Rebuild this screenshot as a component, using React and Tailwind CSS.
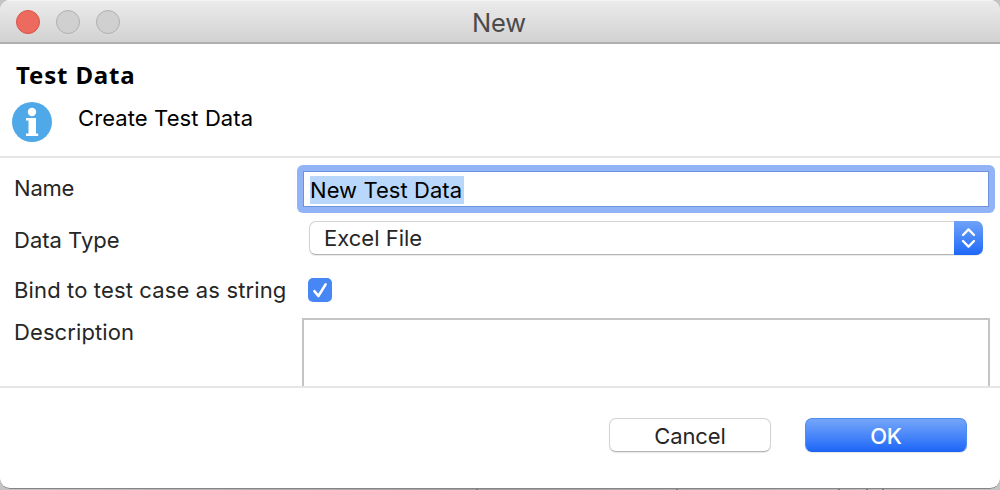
import React from "react";

function TitleBar() {
  return (
    <header className="grid h-11 shrink-0 grid-cols-[1fr_auto_1fr] items-center border-t border-b-2 border-t-[#f4f4f4] border-b-[#b0b0b0] bg-linear-to-b from-[#ebebeb] to-[#d2d2d2] px-4">
      <div className="flex gap-4">
        <span className="size-6 rounded-full border border-[#d9534a] bg-[#ed6a5e]" />
        <span className="size-6 rounded-full border border-[#b0b0b0] bg-[#d0d0d0]" />
        <span className="size-6 rounded-full border border-[#b0b0b0] bg-[#d0d0d0]" />
      </div>
      <h1 className="pt-0.5 pr-0.5 text-[25.5px] leading-8 tracking-[-0.2px] text-[#4b4b4b]">New</h1>
    </header>
  );
}

function Banner() {
  return (
    <section className="h-[114px] shrink-0 border-b-2 border-[#e5e5e5] pt-[15px]">
      <h2 className="pl-4 font-['Noto_Sans'] text-[24px] leading-8 font-bold tracking-[0.85px] text-black">Test Data</h2>
      <div className="flex pt-[11px] pl-3">
        <svg className="size-10" viewBox="0 0 40 40" aria-hidden="true">
          <circle cx="20" cy="20" r="20" fill="#4fa8e8" />
          <circle cx="20" cy="10" r="4.2" fill="#fff" />
          <path d="M14 16h10v15.5h2.2V34H14v-2.5h2.5v-13H14z" fill="#fff" />
        </svg>
        <p className="pl-[26px] text-[22px] leading-8 tracking-[0.1px] text-black">Create Test Data</p>
      </div>
    </section>
  );
}

function Form() {
  return (
    <form className="h-[230px] shrink-0 overflow-hidden border-b-2 border-[#e5e5e5] text-[22px] text-[#262626]">
      <div className="flex h-[55px] pt-[7px]">
        <label className="w-[297px] pt-[7px] pl-3.5 leading-8 tracking-[-0.2px]">Name</label>
        <div className="h-12 w-[698px] rounded-md bg-[#92b3f5] p-1.5">
          <div className="flex h-9 items-center border border-[#6c92dc] bg-white pt-0.5 pl-1.5">
            <span className="bg-[#b9d7fb] pr-0.5 leading-7 tracking-[0.05px] text-black">New Test Data</span>
          </div>
        </div>
      </div>
      <div className="flex h-[65px] pt-2">
        <label className="w-[309px] pt-[3px] pl-3.5 leading-8">Data Type</label>
        <div className="flex h-[34px] w-[674px] rounded-[7px] border border-[#d2d2d2] border-r-0 border-b-[#b5b5b5] bg-white shadow-[0_1px_1px_#00000018]">
          <span className="flex-1 pl-3.5 leading-8">Excel File</span>
          <span className="-my-px flex w-[29px] items-center justify-center rounded-r-[7px] bg-linear-to-b from-[#6fa2f8] to-[#1c67f8]">
            <svg className="h-[22px] w-4" viewBox="0 0 16 22" fill="none" stroke="#fff" strokeWidth="2.3" strokeLinecap="round" strokeLinejoin="round" aria-hidden="true">
              <path d="M2 8 7.5 2.4 13 8M2 14 7.5 19.6 13 14" />
            </svg>
          </span>
        </div>
      </div>
      <div className="flex h-10">
        <label className="w-[308px] pl-3.5 leading-6 tracking-[0.14px]">Bind to test case as string</label>
        <svg className="size-6 rounded-[5px] bg-[#4686f5]" viewBox="0 0 24 24" fill="none" stroke="#fff" strokeWidth="2.6" strokeLinecap="round" strokeLinejoin="round" aria-label="Checked">
          <path d="m6.4 13.2 4 4.8L17.6 6.4" />
        </svg>
      </div>
      <div className="flex h-[90px]">
        <label className="w-[302px] pl-3.5 leading-7 tracking-[0.1px]">Description</label>
        <div className="h-[90px] w-[688px] border-2 border-[#c4c4c4] bg-white" />
      </div>
    </form>
  );
}

function Footer() {
  return (
    <footer className="flex flex-1 justify-end gap-[34px] pt-[30px] pr-[33px] text-[22px]">
      <button className="h-[34px] w-[162px] rounded-[7px] border border-[#d2d2d2] border-b-[#b5b5b5] bg-white pt-0.5 leading-[31px] tracking-[-0.1px] text-[#262626] shadow-[0_1px_1px_#00000018]">Cancel</button>
      <button className="h-[34px] w-[162px] rounded-[7px] border border-[#4d8cf5] border-b-[#1c63f0] bg-linear-to-b from-[#74a5f8] to-[#1d66f8] pt-0.5 leading-[31px] font-medium tracking-[-0.2px] text-white shadow-[0_1px_1px_#00000018]">OK</button>
    </footer>
  );
}

function Backdrop() {
  return (
    <div className="flex h-px">
      <span className="w-[478px] border-r-2 border-[#7c7c7c]" />
      <span className="w-[200px] border-r-2 border-[#7c7c7c]" />
      <span className="w-[162px] border-r-2 border-[#7c7c7c]" />
      <span className="w-7 border-r-2 border-[#7c7c7c]" />
      <span className="w-4 border-r-2 border-[#7c7c7c]" />
    </div>
  );
}

export default function App() {
  return (
    <main className="h-[490px] w-[1000px] overflow-hidden bg-linear-to-r from-[#c4c4c4] via-[#a0a0a0] to-[#c4c4c4] font-[Inter,sans-serif]">
      <div className="flex h-[489px] flex-col overflow-hidden rounded-[10px] border-b border-[#858585] bg-white">
        <TitleBar />
        <Banner />
        <Form />
        <Footer />
      </div>
      <Backdrop />
    </main>
  );
}
